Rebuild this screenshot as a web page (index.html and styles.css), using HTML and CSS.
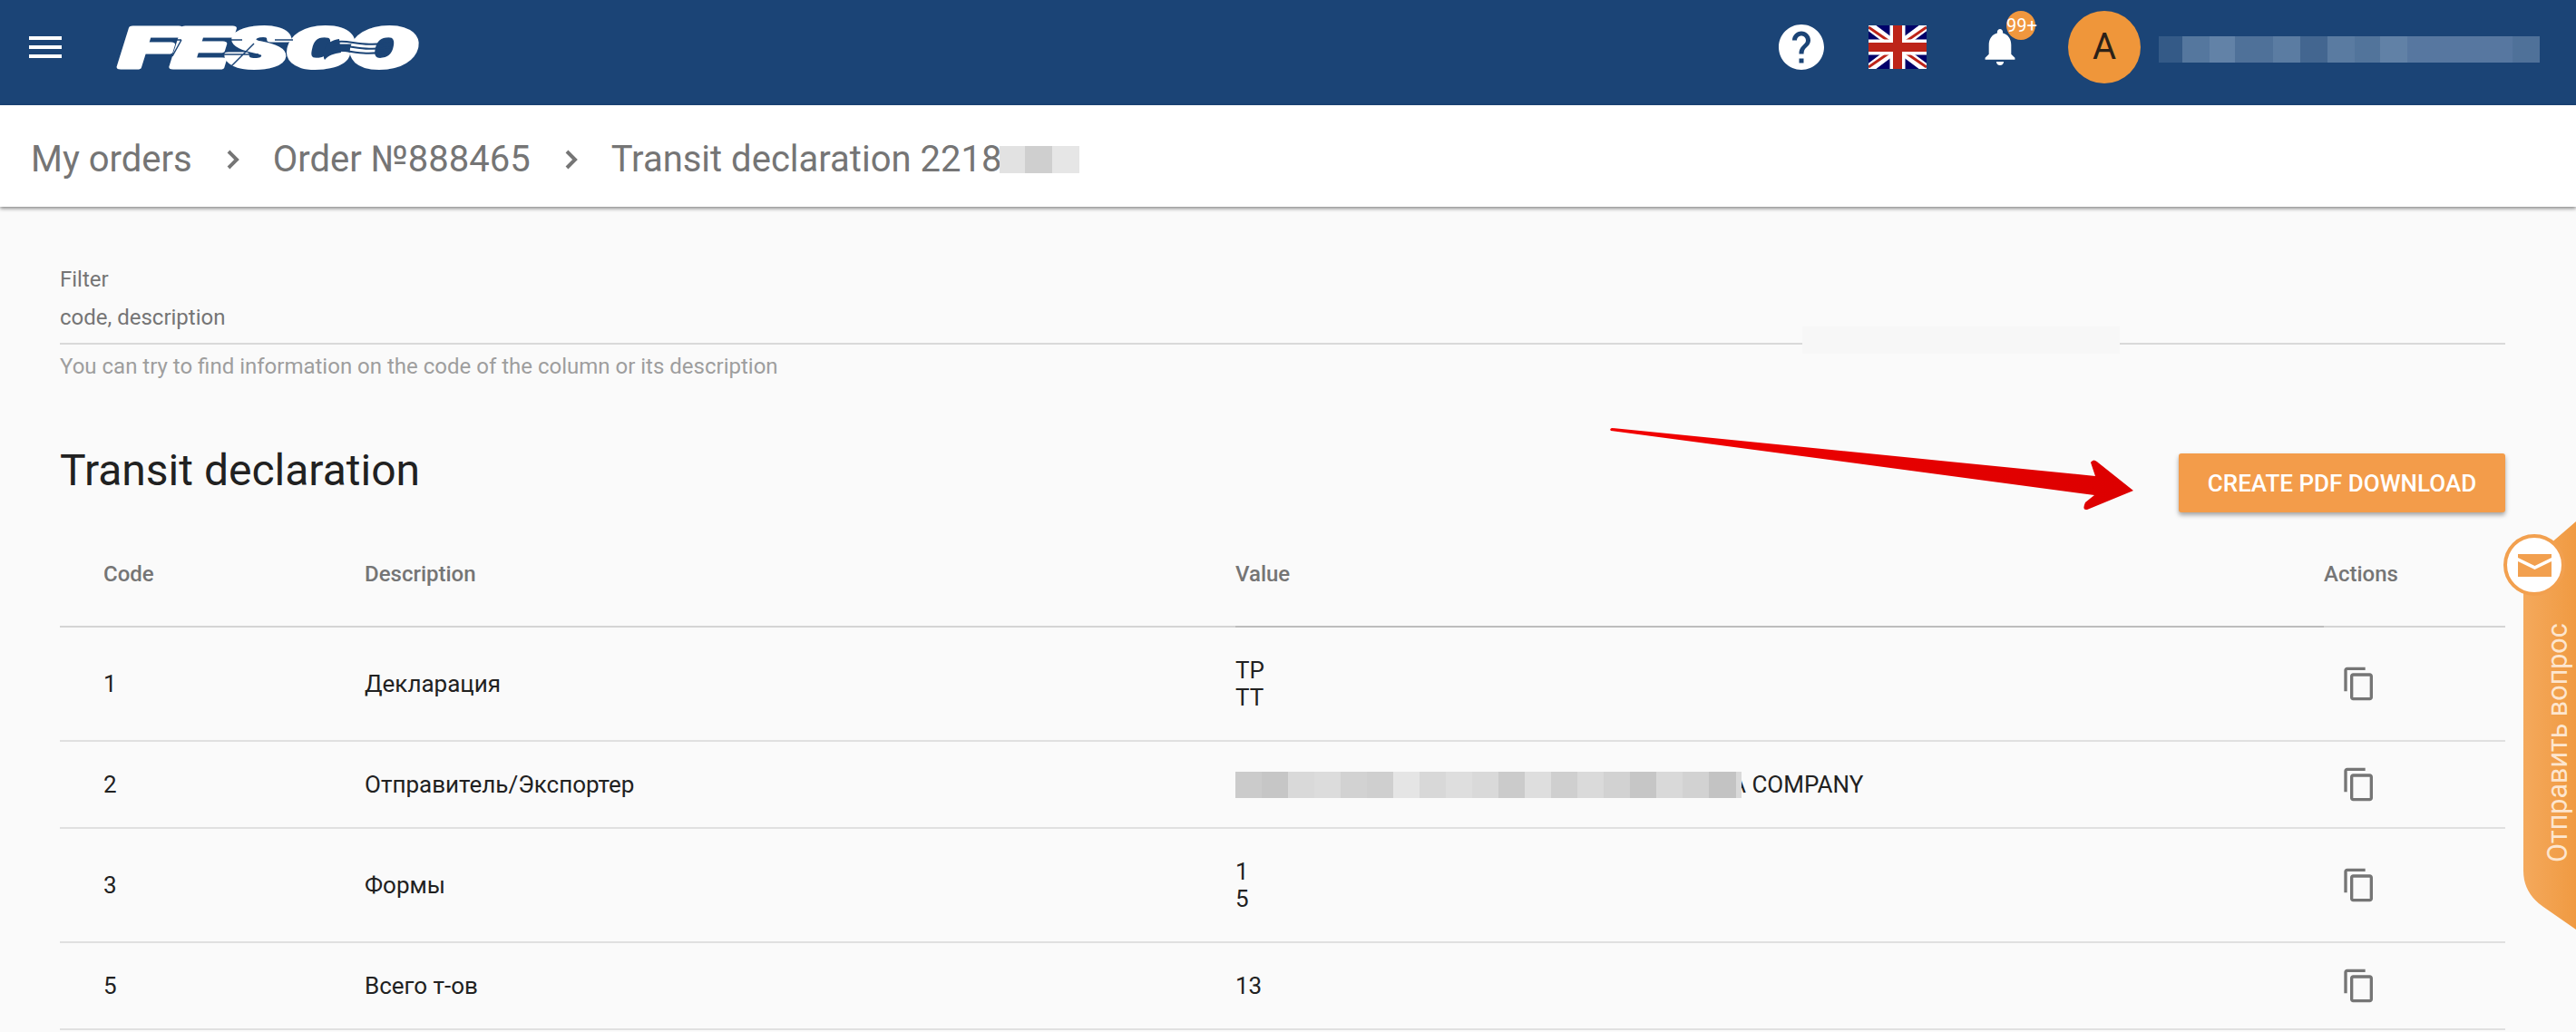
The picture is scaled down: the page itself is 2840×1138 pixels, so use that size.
FILE: index.html
```html
<!DOCTYPE html>
<html lang="en">
<head>
    <meta charset="UTF-8">
    <title>Transit declaration</title>
    <link rel="stylesheet" href="styles.css">
</head>
<body>
    <header class="topbar">
        <div class="burger"><span></span><span></span><span></span></div>
        <svg class="logo" viewBox="0 0 322 49">
            <text x="-7" y="46" textLength="326" lengthAdjust="spacingAndGlyphs" class="logo-text">FESCO</text>
            <path class="logo-line" d="M40 16H60M97 16H127M163 16H183M88 32H145M140 20L110 50M60 16L50 34"/>
            <path class="logo-mouth" d="M234 15C218 17 214 30 218 38C222 33 228 31 236 30Z"/>
            <path class="logo-wave" d="M228 19c14-5 30 6 62 0M228 24c14-5 30 6 62 0M226 29c14-5 30 6 58 0"/>
        </svg>
        <div class="topbar-right">
            <svg class="help" viewBox="2 2 20 20"><path d="M12 2C6.48 2 2 6.48 2 12s4.48 10 10 10 10-4.48 10-10S17.52 2 12 2zm1 17h-2v-2h2v2zm2.07-7.75l-.9.92C13.45 12.9 13 13.5 13 15h-2v-.5c0-1.1.45-2.1 1.17-2.83l1.24-1.26c.37-.36.59-.86.59-1.41 0-1.1-.9-2-2-2s-2 .9-2 2H8c0-2.21 1.79-4 4-4s4 1.79 4 4c0 .88-.36 1.68-.93 2.25z"/></svg>
            <svg class="flag" viewBox="0 0 64 48" preserveAspectRatio="none">
                <rect width="64" height="48" fill="#00006a"/>
                <path d="M0 0L64 48M64 0L0 48" stroke="#fff" stroke-width="10"/>
                <path d="M0 2L32 24M64 46L32 24M64 2L32 24M0 46L32 24" stroke="#bd2419" stroke-width="3"/>
                <path d="M32 0V48M0 24H64" stroke="#fff" stroke-width="17"/>
                <path d="M32 0V48M0 24H64" stroke="#bd2419" stroke-width="10"/>
            </svg>
            <div class="bell-wrap">
                <svg class="bell" viewBox="4 2.500 16 19.500"><path d="M12 22c1.100 0 2-.9 2-2h-4c0 1.100.89 2 2 2zm6-6v-5c0-3.070-1.640-5.640-4.500-6.320V4c0-.83-.67-1.500-1.500-1.500s-1.500.67-1.500 1.500v.68C7.630 5.360 6 7.920 6 11v5l-2 2v1h16v-1l-2-2z"/></svg>
                <span class="badge">99+</span>
            </div>
            <div class="avatar">A</div>
            <div class="user-name"></div>
        </div>
    </header>

    <nav class="crumbs">
        <span>My orders</span>
        <svg class="chev" viewBox="0 0 16 24"><path d="M3 3l9 9-9 9"/></svg>
        <span>Order №888465</span>
        <svg class="chev" viewBox="0 0 16 24"><path d="M3 3l9 9-9 9"/></svg>
        <span>Transit declaration 2218</span>
        <span class="crumb-blur"></span>
    </nav>

    <main class="content">
        <div class="filter">
            <div class="filter-label">Filter</div>
            <div class="filter-value">code, description</div>
            <div class="filter-hint">You can try to find information on the code of the column or its description</div>
            <div class="filter-smudge"></div>
        </div>

        <div class="title-row">
            <h1>Transit declaration</h1>
            <button class="pdf-btn">CREATE PDF DOWNLOAD</button>
        </div>

        <table class="decl">
            <thead>
                <tr>
                    <th class="c-code">Code</th>
                    <th class="c-desc">Description</th>
                    <th class="c-val">Value</th>
                    <th class="c-act">Actions</th>
                </tr>
            </thead>
            <tbody>
                <tr class="tall">
                    <td class="c-code">1</td>
                    <td class="c-desc">Декларация</td>
                    <td class="c-val">TP<br>TT</td>
                    <td class="c-act"><svg class="copy" viewBox="0 0 24 24"><path d="M16 1H4c-1.100 0-2 .9-2 2v14h2V3h12V1zm3 4H8c-1.100 0-2 .9-2 2v14c0 1.100.9 2 2 2h11c1.100 0 2-.9 2-2V7c0-1.100-.9-2-2-2zm0 16H8V7h11v14z"/></svg></td>
                </tr>
                <tr>
                    <td class="c-code">2</td>
                    <td class="c-desc">Отправитель/Экспортер</td>
                    <td class="c-val"><div class="sender"><span class="value-blur"></span><span class="sender-tail">A COMPANY</span></div></td>
                    <td class="c-act"><svg class="copy" viewBox="0 0 24 24"><path d="M16 1H4c-1.100 0-2 .9-2 2v14h2V3h12V1zm3 4H8c-1.100 0-2 .9-2 2v14c0 1.100.9 2 2 2h11c1.100 0 2-.9 2-2V7c0-1.100-.9-2-2-2zm0 16H8V7h11v14z"/></svg></td>
                </tr>
                <tr class="tall">
                    <td class="c-code">3</td>
                    <td class="c-desc">Формы</td>
                    <td class="c-val">1<br>5</td>
                    <td class="c-act"><svg class="copy" viewBox="0 0 24 24"><path d="M16 1H4c-1.100 0-2 .9-2 2v14h2V3h12V1zm3 4H8c-1.100 0-2 .9-2 2v14c0 1.100.9 2 2 2h11c1.100 0 2-.9 2-2V7c0-1.100-.9-2-2-2zm0 16H8V7h11v14z"/></svg></td>
                </tr>
                <tr>
                    <td class="c-code">5</td>
                    <td class="c-desc">Всего т-ов</td>
                    <td class="c-val">13</td>
                    <td class="c-act"><svg class="copy" viewBox="0 0 24 24"><path d="M16 1H4c-1.100 0-2 .9-2 2v14h2V3h12V1zm3 4H8c-1.100 0-2 .9-2 2v14c0 1.100.9 2 2 2h11c1.100 0 2-.9 2-2V7c0-1.100-.9-2-2-2zm0 16H8V7h11v14z"/></svg></td>
                </tr>
            </tbody>
        </table>
    </main>

    <svg class="red-arrow" viewBox="0 0 580 92">
        <defs>
            <linearGradient id="arrow-red" x1="0" x2="1" y1="0" y2="0">
                <stop offset="0" stop-color="#f20000"/>
                <stop offset="1" stop-color="#dc0000"/>
            </linearGradient>
        </defs>
        <path fill="url(#arrow-red)" d="M2 0L535 53Q531 41 530 38Q533 33 538 38L577 69L526 90Q520 91 524 82L534 74L1 3Q-1 1 2 0Z"/>
    </svg>

    <aside class="ask">
        <svg class="ask-shape" viewBox="0 0 58 450">
            <defs>
                <linearGradient id="ask-fill" x1="0" x2="1" y1="0" y2="0">
                    <stop offset="0" stop-color="#f4a95c"/>
                    <stop offset="1" stop-color="#f09a42"/>
                </linearGradient>
            </defs>
            <path fill="url(#ask-fill)" d="M58 0V450L22 425Q0 410 0 385V50Z"/>
        </svg>
        <div class="ask-circle">
            <svg viewBox="0 0 37 25"><path d="M0 0H37V4L18.500 13L0 4ZM0 8L18.500 17L37 8V25H0Z"/></svg>
        </div>
        <div class="ask-text">Отправить вопрос</div>
    </aside>
</body>
</html>
```

FILE: styles.css
```css
html, body {
    margin: 0;
    height: 1138px;
    overflow: hidden;
}
body {
    background: #fafafa;
    font-family: Roboto, "Noto Sans", sans-serif;
    color: #212121;
    position: relative;
}

/* top bar */
.topbar {
    height: 116px;
    background: #1b4476;
    display: flex;
    align-items: center;
    padding: 0 40px 12px 32px;
    box-sizing: border-box;
}
.burger {
    width: 36px;
    display: flex;
    flex-direction: column;
    gap: 6px;
}
.burger span {
    height: 4px;
    background: #fff;
}
.logo {
    width: 322px;
    height: 49px;
    margin-left: 72px;
    overflow: visible;
}
.logo-text {
    font-family: Roboto, sans-serif;
    font-weight: 900;
    font-style: italic;
    font-size: 60px;
    fill: #fff;
    stroke: #fff;
    stroke-width: 5;
    stroke-linejoin: round;
}
.logo-line {
    stroke: #1b4476;
    stroke-width: 1.500;
    fill: none;
}
.logo-mouth {
    fill: #1b4476;
}
.logo-wave {
    stroke: #1b4476;
    stroke-width: 2;
    fill: none;
}
.topbar-right {
    margin-left: auto;
    display: flex;
    align-items: center;
}
.help {
    width: 50px;
    height: 50px;
    fill: #fff;
}
.flag {
    width: 64px;
    height: 48px;
    margin-left: 49px;
}
.bell-wrap {
    position: relative;
    width: 34px;
    height: 40px;
    margin-left: 64px;
}
.bell {
    width: 34px;
    height: 40px;
    fill: #fff;
    display: block;
}
.badge {
    position: absolute;
    left: 24px;
    top: -20px;
    width: 32px;
    height: 32px;
    border-radius: 50%;
    background: #f0973e;
    color: #fff;
    font-size: 20px;
    line-height: 32px;
    text-align: center;
}
.avatar {
    width: 80px;
    height: 80px;
    margin-left: 58px;
    border-radius: 50%;
    background: #ef963a;
    color: #2b2118;
    font-size: 40px;
    line-height: 80px;
    text-align: center;
}
.user-name {
    width: 420px;
    height: 29px;
    margin: 5px 0 0 20px;
    background: linear-gradient(to right, #345a87 0 26px, #55779e 26px 56px, #6282a7 56px 84px, #4f7199 84px 126px, #5b7ca2 126px 156px, #436690 156px 186px, #5a7ba1 186px 216px, #52749b 216px 244px, #6181a6 244px 274px, #5777a0 274px 390px, #4f7199 390px 420px);
}

/* breadcrumbs */
.crumbs {
    height: 112px;
    box-sizing: border-box;
    background: #fff;
    box-shadow: 0 2px 4px rgba(0, 0, 0, .45);
    display: flex;
    align-items: center;
    padding: 7px 0 0 34px;
    font-size: 40px;
    color: #757575;
    position: relative;
}
.chev {
    width: 16px;
    height: 24px;
    margin: 0 36px 0 37px;
    fill: none;
    stroke: #757575;
    stroke-width: 4;
}
.crumb-blur {
    width: 88px;
    height: 30px;
    margin-left: -2px;
    background: linear-gradient(to right, #e2e2e2 0 28px, #cfcfcf 28px 58px, #e6e6e6 58px 88px);
}

/* content */
.content {
    padding: 66px 78px 0 66px;
}
.filter {
    position: relative;
    font-size: 24px;
}
.filter-label {
    color: #757575;
    line-height: 28px;
}
.filter-value {
    color: #757575;
    line-height: 28px;
    margin-top: 14px;
    padding-bottom: 14px;
    border-bottom: 2px solid #d9d9d9;
}
.filter-hint {
    color: #9e9e9e;
    line-height: 28px;
    margin-top: 10px;
}
.filter-smudge {
    position: absolute;
    left: 1921px;
    top: 66px;
    width: 350px;
    height: 30px;
    background: #f7f7f7;
}
.title-row {
    display: flex;
    justify-content: space-between;
    align-items: flex-start;
    margin-top: 82px;
}
h1 {
    margin: -11px 0 0;
    font-size: 48px;
    font-weight: 400;
    line-height: 60px;
}
.pdf-btn {
    width: 360px;
    height: 65px;
    border: 0;
    border-radius: 3px;
    background: #f39c4a;
    color: #fff;
    font-family: inherit;
    font-size: 26px;
    font-weight: 500;
    box-shadow: 0 3px 5px rgba(0, 0, 0, .35);
}

/* table */
.decl {
    width: 2696px;
    border-collapse: collapse;
    table-layout: fixed;
    margin-top: 8px;
}
.decl th {
    height: 115px;
    padding: 2px 0 0;
    font-size: 24px;
    font-weight: 500;
    color: #757575;
    text-align: left;
    border-bottom: 2px solid #d4d4d4;
}
.decl th.c-val {
    border-bottom-color: #bdbdbd;
}
.decl td {
    height: 94px;
    padding: 0;
    font-size: 26px;
    line-height: 30px;
    border-bottom: 2px solid #e0e0e0;
}
.decl tr.tall td {
    height: 124px;
}
.c-code {
    width: 240px;
    padding-left: 48px !important;
}
.c-desc {
    width: 960px;
    padding-left: 48px !important;
}
.c-val {
    width: 1200px;
}
.c-act {
    width: 200px;
}
td.c-act {
    padding-left: 19px !important;
}
.copy {
    width: 40px;
    height: 40px;
    fill: #757575;
    display: block;
}
.sender {
    display: flex;
    align-items: center;
}
.value-blur {
    width: 558px;
    height: 29px;
    position: relative;
    z-index: 1;
    background: linear-gradient(to right, #cbcbcb 0 29px, #c6c6c6 29px 58px, #d9d9d9 58px 87px, #dcdcdc 87px 116px, #d2d2d2 116px 145px, #cfcfcf 145px 174px, #e5e5e5 174px 203px, #d8d8d8 203px 232px, #dedede 232px 261px, #d9d9d9 261px 290px, #cbcbcb 290px 319px, #dedede 319px 348px, #cfcfcf 348px 377px, #dadada 377px 406px, #d2d2d2 406px 435px, #c6c6c6 435px 464px, #d9d9d9 464px 493px, #d2d2d2 493px 522px, #c3c3c3 522px 552px, #d9d9d9 552px 558px);
}
.sender-tail {
    margin-left: -12px;
}

/* red pointer and the side tab lie over the page */
.red-arrow {
    position: absolute;
    left: 1775px;
    top: 472px;
    width: 580px;
    height: 92px;
    overflow: visible;
}
.ask {
    position: absolute;
    left: 2756px;
    top: 575px;
    width: 84px;
    height: 450px;
}
.ask-shape {
    position: absolute;
    right: 0;
    top: 0;
    width: 58px;
    height: 450px;
}
.ask-circle {
    position: absolute;
    left: 4px;
    top: 14px;
    width: 68px;
    height: 68px;
    box-sizing: border-box;
    border: 4px solid #f2a04f;
    border-radius: 50%;
    background: #fff;
    display: flex;
    align-items: center;
    justify-content: center;
}
.ask-circle svg {
    width: 37px;
    height: 25px;
    fill: #f2a04f;
}
.ask-text {
    position: absolute;
    left: 46px;
    top: 111px;
    height: 265px;
    writing-mode: vertical-rl;
    transform: rotate(180deg);
    font-size: 30.500px;
    line-height: 36px;
    color: #fde6cf;
    white-space: nowrap;
}
```
